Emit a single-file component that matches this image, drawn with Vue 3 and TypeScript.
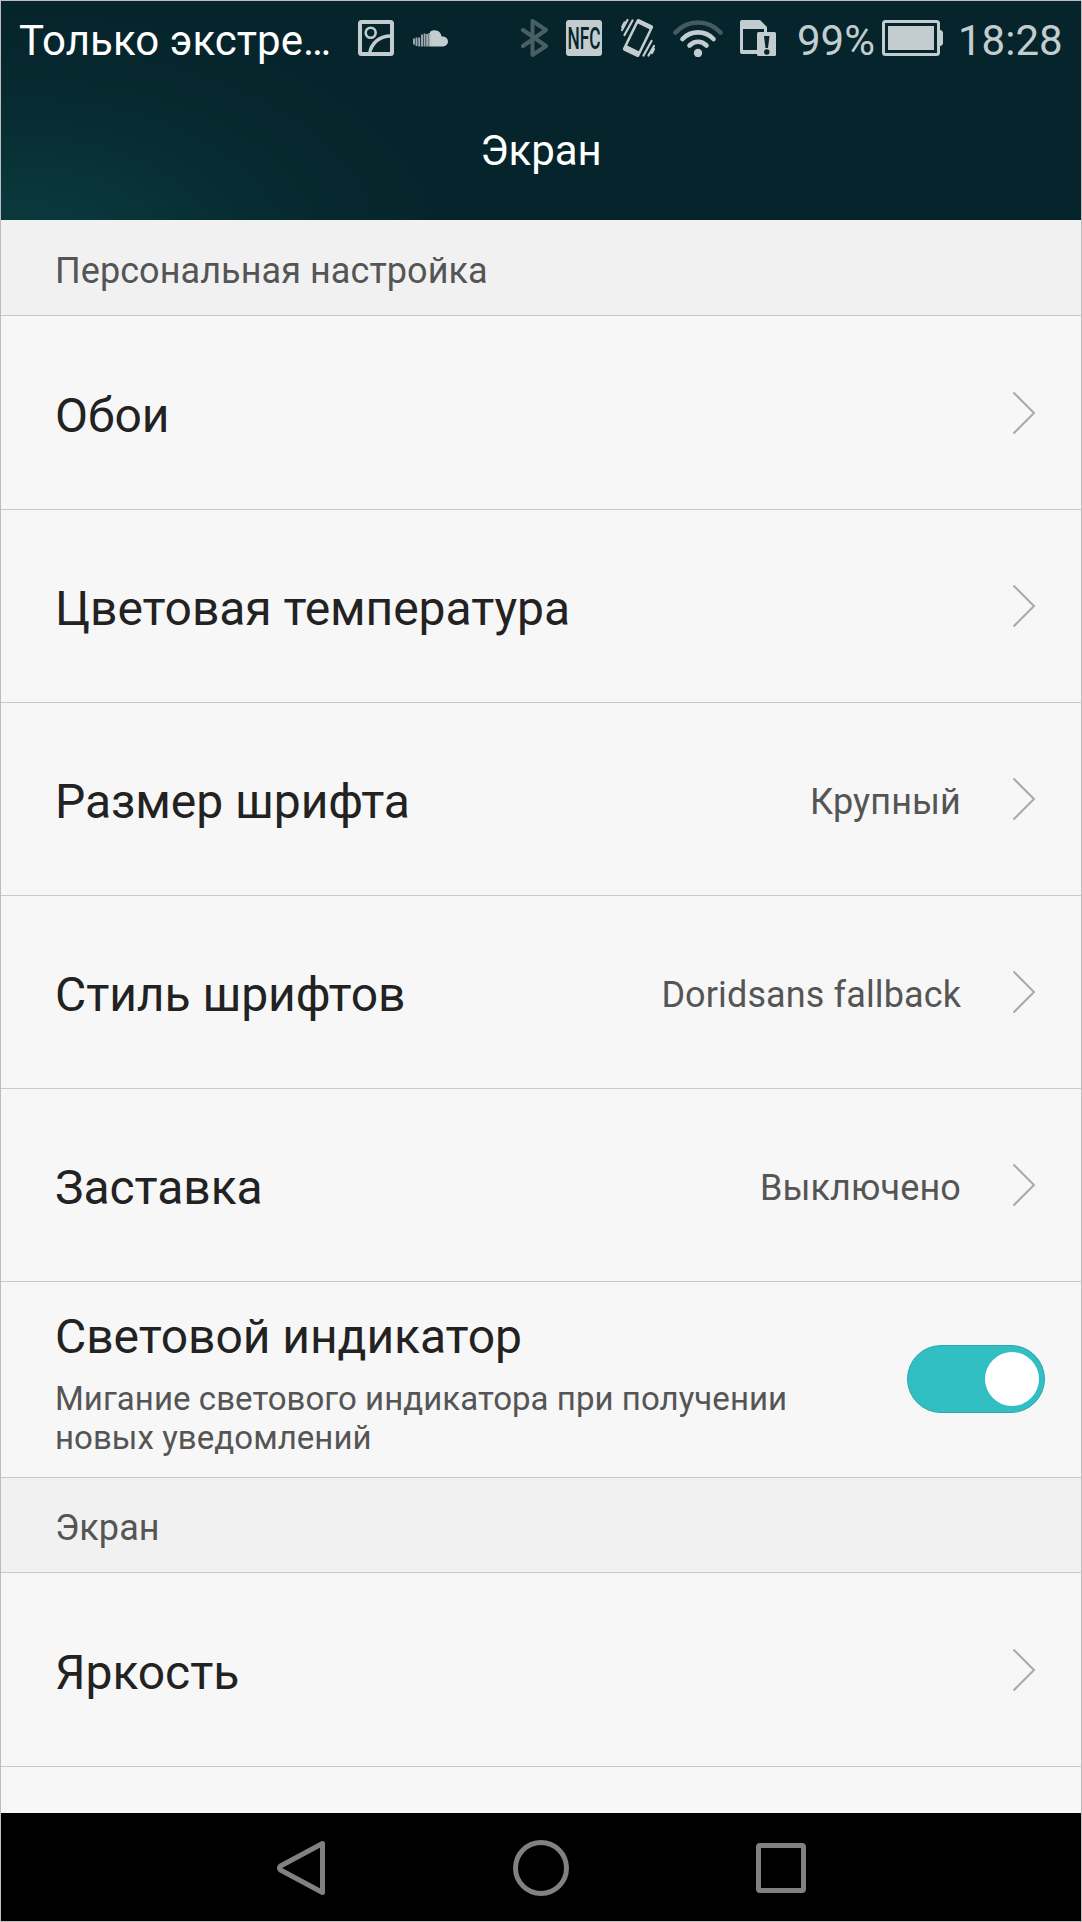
<script setup lang="ts">
interface Row { label: string; value?: string }
const rows: Row[] = [
  { label: 'Обои' },
  { label: 'Цветовая температура' },
  { label: 'Размер шрифта', value: 'Крупный' },
  { label: 'Стиль шрифтов', value: 'Doridsans fallback' },
  { label: 'Заставка', value: 'Выключено' },
]
</script>

<template>
  <div class="screen">
    <header class="top">
      <div class="status">
        <span class="carrier">Только экстре…</span>
        <svg class="i-pic" width="36" height="36" viewBox="0 0 36 36" fill="none" stroke="#c3cdcf">
          <rect x="2" y="2" width="32" height="32" rx="1.5" stroke-width="4" />
          <circle cx="12.7" cy="12.7" r="5" stroke-width="2.6" />
          <path d="M11.5 34C13 23 22 15.5 34 16" stroke-width="3.4" />
        </svg>
        <svg class="i-cloud" width="35" height="17" viewBox="0 0 35 17" fill="#c3cdcf">
          <path d="M17 1.8C23 -1.8 28 2 28.6 6.6C32 6 35 8.4 35 11.6C35 14.5 32.6 16.5 30 16.5H17Z" />
          <path d="M1 8.5V14.5M3.500 7.500V16M6.200 7.500V16.500M9 4.500V16.500M11.600 3.500V16.500M14.100 4V16.500M16.300 3V16.500" stroke="#9fabae" stroke-width="1.9" />
        </svg>
        <svg class="i-bt" width="28" height="38" viewBox="0 0 28 38" fill="none" stroke="#4a5f64" stroke-width="4" stroke-linejoin="round" stroke-linecap="round">
          <path d="M2 11L25 27L11.500 36V2L25 11L2 27" />
        </svg>
        <svg class="i-nfc" width="36" height="36" viewBox="0 0 36 36">
          <rect width="36" height="36" rx="3" fill="#c3cdcf" />
          <text x="1.5" y="29" font-size="30.5" textLength="33" lengthAdjust="spacingAndGlyphs" fill="#07252b" font-weight="500">NFC</text>
        </svg>
        <svg class="i-vib" width="34" height="38" viewBox="0 0 34 38" fill="none" stroke="#c3cdcf" stroke-linecap="round">
          <g transform="rotate(26 17 19)">
            <rect x="8" y="1.5" width="18" height="35" rx="2" fill="#c3cdcf" stroke="none" />
            <rect x="10.5" y="6" width="13" height="24.5" fill="#07252b" stroke="none" />
          </g>
          <path d="M11.5 1.5L3.5 16M6.5 1L1 11M3.5 3.5L1.2 8M22.5 36.5L30.5 22M27.5 36.5L33 27M31 34L33 30" stroke-width="2.2" />
        </svg>
        <svg class="i-wifi" width="50" height="38" viewBox="0 0 50 38" fill="none" stroke-width="4.6" stroke-linecap="round">
          <path d="M2.5 13.5C15 .2 35 .2 47.5 13.5" stroke="#465b60" />
          <path d="M9.5 20C18 11.2 32 11.2 40.5 20M16.5 26.5C21.5 21.5 28.5 21.5 33.5 26.5" stroke="#c3cdcf" />
          <circle cx="25" cy="34" r="4.2" fill="#c3cdcf" />
        </svg>
        <svg class="i-sim" width="36" height="36" viewBox="0 0 36 36">
          <path d="M2 0H20L27 7V34H2Q0 34 0 32V2Q0 0 2 0Z" fill="#c3cdcf" />
          <path d="M3 9H24V30H3Z" fill="#07252b" />
          <rect x="17" y="12" width="19" height="24" rx="1.5" fill="#c3cdcf" />
          <path d="M24 16H29.5L28 28H25.5Z" fill="#07252b" />
          <circle cx="26.8" cy="32" r="2.7" fill="#07252b" />
        </svg>
        <span class="pct">99%</span>
        <svg class="i-bat" width="61" height="36" viewBox="0 0 61 36" fill="#c3cdcf">
          <rect x="1.5" y="1.5" width="55" height="33" rx="2" fill="none" stroke="#c3cdcf" stroke-width="3" />
          <rect x="6" y="6" width="46" height="24" />
          <path d="M57 10H59L61 12V24L59 26H57Z" />
        </svg>
        <span class="clock">18:28</span>
      </div>
      <div class="title"><h1>Экран</h1></div>
    </header>

    <main class="list">
      <div class="section">Персональная настройка</div>
      <div v-for="r in rows" :key="r.label" class="row">
        <span class="label">{{ r.label }}</span>
        <span v-if="r.value" class="value">{{ r.value }}</span>
        <svg class="chev" width="24" height="44" viewBox="0 0 24 44"><path d="M1.5 1.5L22 22L1.5 42.5" /></svg>
      </div>
      <div class="row tall">
        <div class="stack">
          <span class="label">Световой индикатор</span>
          <p class="hint">Мигание светового индикатора при получении<br />новых уведомлений</p>
        </div>
        <div class="toggle"><i class="knob"></i></div>
      </div>
      <div class="section second">Экран</div>
      <div class="row">
        <span class="label">Яркость</span>
        <svg class="chev" width="24" height="44" viewBox="0 0 24 44"><path d="M1.5 1.5L22 22L1.5 42.5" /></svg>
      </div>
    </main>

    <nav class="nav">
      <svg width="50" height="56" viewBox="0 0 50 56"><path d="M45.5 3.5V52.5L3.5 30Q1.500 28 3.5 26Z" /></svg>
      <svg width="58" height="58" viewBox="0 0 58 58"><circle cx="29" cy="29" r="25.5" /></svg>
      <svg width="50" height="50" viewBox="0 0 50 50"><rect x="2.5" y="2.5" width="45" height="45" rx="1.5" /></svg>
    </nav>
  </div>
</template>

<style>
body { margin: 0; }
</style>

<style scoped>
.screen {
  box-sizing: border-box;
  width: 1082px;
  height: 1922px;
  border: 1px solid #bdbdbd;
  display: flex;
  flex-direction: column;
  overflow: hidden;
  font-family: Roboto, "Liberation Sans", sans-serif;
  background: #f7f7f7;
}
.top {
  height: 219px;
  flex: none;
  background: radial-gradient(ellipse 430px 240px at 10px 250px, #0b3b3e 0%, #09363a 25%, #062b30 62%, #06242b 100%) #06242b;
  color: #fff;
}
.status { display: flex; align-items: flex-start; height: 76px; color: #c3cdcf; }
.status svg { flex: none; display: block; margin-top: 19px; }
.status span { flex: none; white-space: nowrap; font-size: 42px; line-height: 50px; margin-top: 15px; }
.carrier { color: #fff; width: 338px; padding-left: 18px; box-sizing: border-box; letter-spacing: 0.05px; }
.status .i-pic { margin-left: 19px; }
.status .i-cloud { margin-left: 19px; margin-top: 29px; }
.status .i-bt { margin-left: 73px; margin-top: 18px; }
.status .i-nfc { margin-left: 17px; }
.status .i-vib { margin-left: 19px; margin-top: 18px; }
.status .i-wifi { margin-left: 18px; margin-top: 18px; }
.status .i-sim { margin-left: 17px; }
.pct { margin-left: 21px; width: 85px; }
.clock { margin-left: 15px; }
.title { height: 143px; display: flex; justify-content: center; }
.title h1 { margin: 49px 0 0; font-size: 42px; line-height: 50px; font-weight: 400; }
.list { flex: 1; min-height: 0; overflow: hidden; }
.section {
  height: 96px;
  box-sizing: border-box;
  padding: 6px 0 0 54px;
  display: flex;
  align-items: center;
  background: #f1f1f1;
  border-bottom: 1px solid #c9c9c9;
  font-size: 36px;
  letter-spacing: 0.07px;
  color: #555;
}
.row {
  height: 193px;
  box-sizing: border-box;
  border-bottom: 1px solid #c9c9c9;
  padding: 0 45px 0 54px;
  display: flex;
  align-items: center;
}
.section + .row { height: 194px; }
.label { font-size: 48px; line-height: 56px; letter-spacing: -0.06px; color: #222; padding-top: 6px; margin-right: auto; }
.value { font-size: 36px; line-height: 42px; letter-spacing: 0.12px; color: #555; padding-top: 5px; margin-right: 51px; }
.chev { fill: none; stroke: #aaa; stroke-width: 2; flex: none; }
.tall { height: 196px; padding-right: 36px; align-items: flex-start; }
.stack { margin-right: auto; display: flex; flex-direction: column; }
.tall .label { padding-top: 27px; }
.hint { margin: 14px 0 0; font-size: 33px; line-height: 39px; letter-spacing: 0.05px; color: #555; }
.toggle {
  width: 138px;
  height: 68px;
  margin-top: 63px;
  box-sizing: border-box;
  border: 1px solid #2aa8ad;
  border-radius: 34px;
  background: #32bfc4;
  display: flex;
  align-items: center;
  justify-content: flex-end;
  padding-right: 5px;
}
.knob { width: 54px; height: 54px; border-radius: 50%; background: #fff; }
.second { height: 95px; }
.nav { height: 108px; flex: none; box-sizing: border-box; padding-top: 2px; background: #000; display: flex; align-items: center; }
.nav svg { flex: none; fill: none; stroke: #818181; stroke-width: 5; stroke-linejoin: round; }
.nav svg:nth-child(1) { margin-left: 276px; }
.nav svg:nth-child(2) { margin-left: 185px; }
.nav svg:nth-child(3) { margin-left: 186px; }
</style>
